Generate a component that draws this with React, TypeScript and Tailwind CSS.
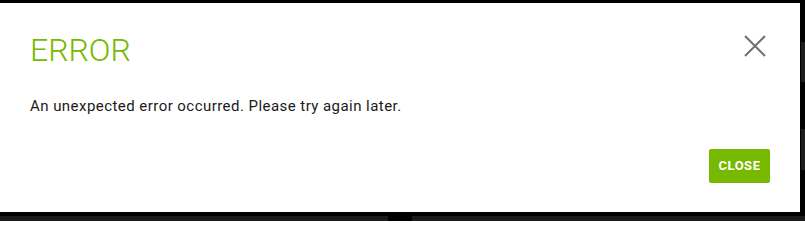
export default function App() {
  return (
    <div className="relative w-[805px] h-[221px] bg-black overflow-hidden" style={{ fontFamily: 'Roboto, "Liberation Sans", sans-serif' }}>
      {/* page behind the modal */}
      <div className="absolute left-[801px] top-[42px] w-[4px] h-[40px] bg-[#1c1c1c]" />
      <div className="absolute left-[801px] top-[129px] w-[4px] h-[41px] bg-[#1c1c1c]" />
      <div className="absolute left-0 top-[216px] w-[805px] h-[5px] flex">
        <div className="w-[388px] bg-[#1a1a1a]" />
        <div className="w-[24px] bg-black" />
        <div className="flex-1 bg-[#1a1a1a]" />
      </div>

      {/* modal */}
      <div className="absolute left-0 top-[3px] w-[800px] h-[209px] bg-white flex flex-col px-[30px] pt-[28px]">
        <div className="flex items-start justify-between">
          <h1 className="text-[32px] leading-[38px] font-light tracking-[0px] text-[#76b900]">ERROR</h1>
          <button className="mt-[4px] mr-[4px] w-[22px] h-[22px] text-[#6e6e78]">
            <svg viewBox="0 0 22 22" width="22" height="22" fill="none" stroke="currentColor" strokeWidth="2">
              <path d="M1 1L21 21M21 1L1 21" />
            </svg>
          </button>
        </div>
        <p className="mt-[27px] text-[15px] leading-[20px] tracking-[0.45px] text-[#1a1a1a]">
          An unexpected error occurred. Please try again later.
        </p>
        <div className="flex justify-end mt-[33px]">
          <button className="w-[61px] h-[34px] rounded-[2px] bg-[#76b900] text-white text-[13px] font-bold tracking-[0.5px]">
            CLOSE
          </button>
        </div>
      </div>
    </div>
  );
}
